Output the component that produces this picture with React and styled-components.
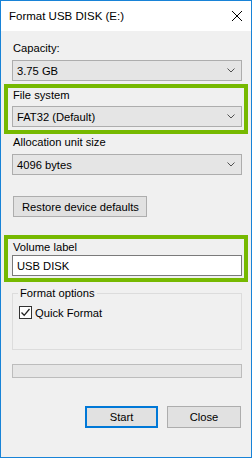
import React from 'react';
import styled, { createGlobalStyle } from 'styled-components';

const Global = createGlobalStyle`
  html, body {
    margin: 0;
    padding: 0;
    background: #f0f0f0;
  }
  * {
    box-sizing: border-box;
  }
`;

const Window = styled.div`
  width: 252px;
  height: 458px;
  border: 1px solid #1883d7;
  background: #f0f0f0;
  font-family: 'Liberation Sans', Arial, sans-serif;
  font-size: 11.2px;
  color: #000;
  display: flex;
  flex-direction: column;
  white-space: nowrap;
`;

const TitleBar = styled.div`
  height: 30px;
  background: #fff;
  display: flex;
  align-items: center;
  justify-content: space-between;
  padding: 0 8px 0 8px;
  font-size: 11.5px;
  flex-shrink: 0;
`;

const CloseX = styled.svg`
  width: 10px;
  height: 10px;
  margin-right: 1px;
`;

const Body = styled.div`
  flex: 1;
  padding: 0 9px 0 11px;
  display: flex;
  flex-direction: column;
`;

const Label = styled.div`
  line-height: 15px;
  height: 15px;
  margin-top: ${p => p.$top || 0}px;
  padding-left: 1px;
`;

const Select = styled.div`
  height: 21px;
  margin-top: ${p => p.$top || 0}px;
  border: 1px solid #adadad;
  background: #e5e5e5;
  display: flex;
  align-items: center;
  justify-content: space-between;
  padding: 0 6px 0 4px;
`;

const Chevron = styled.svg`
  width: 8px;
  height: 5px;
`;

const Highlight = styled.div`
  margin: ${p => p.$top || 0}px -6px 0 -8px;
  border: 4px solid #76b900;
  padding: ${p => p.$padTop || 0}px 2px ${p => p.$padBottom || 0}px 4px;
`;

const Button = styled.div`
  height: ${p => p.$h || 21}px;
  width: ${p => p.$w}px;
  border: ${p => (p.$primary ? '2px solid #0078d7' : '1px solid #adadad')};
  background: #e1e1e1;
  display: flex;
  align-items: center;
  justify-content: ${p => (p.$left ? 'flex-start' : 'center')};
  padding-left: ${p => (p.$left ? 8 : 0)}px;
  margin-top: ${p => p.$top || 0}px;
  margin-left: ${p => p.$ml || 0}px;
`;

const TextInput = styled.div`
  height: 21px;
  border: 1px solid #7a7a7a;
  background: #fff;
  display: flex;
  align-items: center;
  padding-left: 4px;
`;

const GroupBox = styled.div`
  margin-top: 11px;
  height: 57px;
  border: 1px solid #dcdcdc;
  display: flex;
  flex-direction: column;
  align-items: flex-start;
`;

const Legend = styled.div`
  margin: -8px 0 0 5px;
  padding: 0 2px;
  line-height: 15px;
  background: #f0f0f0;
`;

const CheckRow = styled.div`
  display: flex;
  align-items: center;
  margin: 5px 0 0 6px;
  gap: 3px;
`;

const CheckBox = styled.div`
  width: 13px;
  height: 13px;
  border: 1px solid #333;
  background: #fff;
  display: flex;
  align-items: center;
  justify-content: center;
`;

const Progress = styled.div`
  margin-top: 14px;
  height: 14px;
  border: 1px solid #bcbcbc;
  background: #e6e6e6;
`;

const ButtonRow = styled.div`
  margin-top: 28px;
  display: flex;
  justify-content: flex-end;
  gap: 9px;
  padding-right: 1px;
`;

const Drop = ({ value, top }) => (
  <Select $top={top}>
    <span>{value}</span>
    <Chevron viewBox="0 0 8 5">
      <path d="M0.5 0.5 L4 4 L7.5 0.5" fill="none" stroke="#505050" strokeWidth="1" />
    </Chevron>
  </Select>
);

export default function App() {
  return (
    <>
      <Global />
      <Window>
        <TitleBar>
          <span>Format USB DISK (E:)</span>
          <CloseX viewBox="0 0 10 10">
            <path d="M0 0 L10 10 M10 0 L0 10" stroke="#000" strokeWidth="1" />
          </CloseX>
        </TitleBar>
        <Body>
          <Label $top={10}>Capacity:</Label>
          <Drop value="3.75 GB" top={4} />

          <Highlight $top={3} $padBottom={3}>
            <Label>File system</Label>
            <Drop value="FAT32 (Default)" top={3} />
          </Highlight>

          <Label $top={1}>Allocation unit size</Label>
          <Drop value="4096 bytes" top={4} />

          <Button $w={134} $top={21} $ml={1} $left>Restore device defaults</Button>

          <Highlight $top={18} $padTop={1} $padBottom={2}>
            <Label>Volume label</Label>
            <TextInput>USB DISK</TextInput>
          </Highlight>

          <GroupBox>
            <Legend>Format options</Legend>
            <CheckRow>
              <CheckBox>
                <svg width="11" height="11" viewBox="0 0 11 11">
                  <path d="M1.5 5.5 L4.2 8.3 L9.5 2" fill="none" stroke="#222" strokeWidth="1.3" />
                </svg>
              </CheckBox>
              <span>Quick Format</span>
            </CheckRow>
          </GroupBox>

          <Progress />

          <ButtonRow>
            <Button $w={73} $h={22} $primary>Start</Button>
            <Button $w={74} $h={22}>Close</Button>
          </ButtonRow>
        </Body>
      </Window>
    </>
  );
}
